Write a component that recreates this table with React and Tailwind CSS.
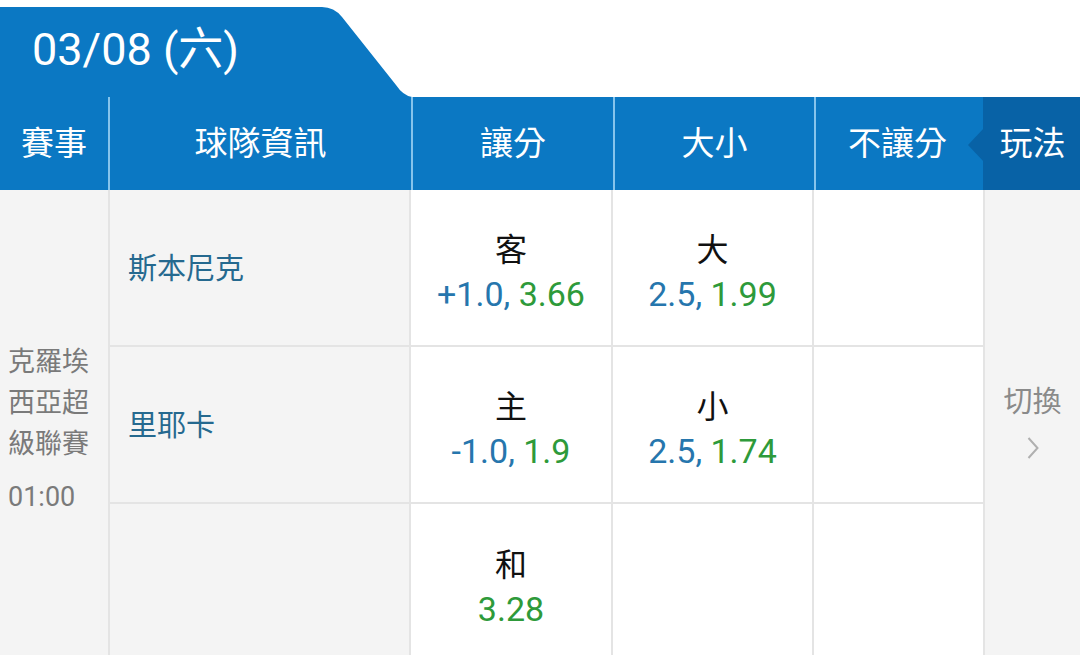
import React from 'react';

const rows = [
  { team: '斯本尼克', spread: { label: '客', line: '+1.0', odds: '3.66' }, total: { label: '大', line: '2.5', odds: '1.99' } },
  { team: '里耶卡', spread: { label: '主', line: '-1.0', odds: '1.9' }, total: { label: '小', line: '2.5', odds: '1.74' } },
  { team: '', spread: { label: '和', line: null, odds: '3.28' }, total: null },
];

const OddsCell = ({ cell }) => (
  <div className="flex flex-col items-center justify-center pt-[8px] bg-white border-r-2 border-[#e4e4e4] leading-[44px]">
    {cell && (
      <>
        <span className="text-[32px] text-[#111]">{cell.label}</span>
        <span className="text-[34px]">
          {cell.line && <span className="text-[#2676ad]">{cell.line}, </span>}
          <span className="text-[#2e9a3a]">{cell.odds}</span>
        </span>
      </>
    )}
  </div>
);

export default function App() {
  return (
    <div className="w-[1080px] h-[655px] overflow-hidden bg-white font-['Roboto','Noto_Sans_CJK_TC',sans-serif]">
      {/* date tab */}
      <div className="flex h-[90px] mt-[7px]">
        <div className="w-[320px] bg-[#0b78c3] flex items-center pl-[32px] pb-[4px]">
          <span className="text-white text-[45px]">03/08 (六)</span>
        </div>
        <svg width="92" height="90" viewBox="0 0 92 90" className="block">
          <path d="M0 0 L2 0 Q14 0 22 10 L76 78 Q84 90 94 90 L0 90 Z" fill="#0b78c3" />
        </svg>
      </div>

      {/* header */}
      <div className="flex h-[93px] bg-[#0b78c3] text-white text-[33px]">
        <div className="w-[110px] flex items-center justify-center border-r-2 border-[#86c4ec]">賽事</div>
        <div className="w-[303px] flex items-center justify-center border-r-2 border-[#86c4ec]">球隊資訊</div>
        <div className="w-[202px] flex items-center justify-center border-r-2 border-[#86c4ec]">讓分</div>
        <div className="w-[201px] flex items-center justify-center border-r-2 border-[#86c4ec]">大小</div>
        <div className="w-[167px] flex items-center justify-center pr-[4px]">不讓分</div>
        <div className="relative flex-1 bg-[#0862a6] flex items-center justify-center pl-[2px]">
          <svg width="16" height="34" viewBox="0 0 16 34" className="absolute left-[-15px] top-[31px]">
            <path d="M16 0 L0 17 L16 34 Z" fill="#0862a6" />
          </svg>
          玩法
        </div>
      </div>

      {/* body */}
      <div className="flex">
        <div className="w-[110px] bg-[#f4f4f4] border-r-2 border-[#e4e4e4] flex flex-col justify-center pl-[8px] pt-[8px] text-[27px] leading-[41px] text-[#7a7a7a]">
          <span>克羅埃</span>
          <span>西亞超</span>
          <span>級聯賽</span>
          <span className="mt-[12px]">01:00</span>
        </div>
        <div className="w-[873px] flex flex-col">
          {rows.map((r, i) => (
            <div key={i} className={`grid grid-cols-[301px_202px_201px_169px] h-[157px] ${i < rows.length - 1 ? 'border-b-2 border-[#e4e4e4]' : ''}`}>
              <div className="bg-[#f4f4f4] border-r-2 border-[#e4e4e4] flex items-center pl-[18px] pt-[4px] text-[29px] text-[#25698f]">
                {r.team}
              </div>
              <OddsCell cell={r.spread} />
              <OddsCell cell={r.total} />
              <div className="bg-white" />
            </div>
          ))}
        </div>
        <div className="flex-1 bg-[#f4f4f4] border-l-2 border-[#e4e4e4] flex flex-col items-center justify-center pb-[12px] text-[29px] leading-[44px] text-[#8a8a8a]">
          <span>切換</span>
          <svg width="12" height="24" viewBox="0 0 12 24" className="mt-[12px]">
            <path d="M1.5 2 L10.5 12 L1.5 22" fill="none" stroke="#b0b0b0" strokeWidth="2" />
          </svg>
        </div>
      </div>
    </div>
  );
}
